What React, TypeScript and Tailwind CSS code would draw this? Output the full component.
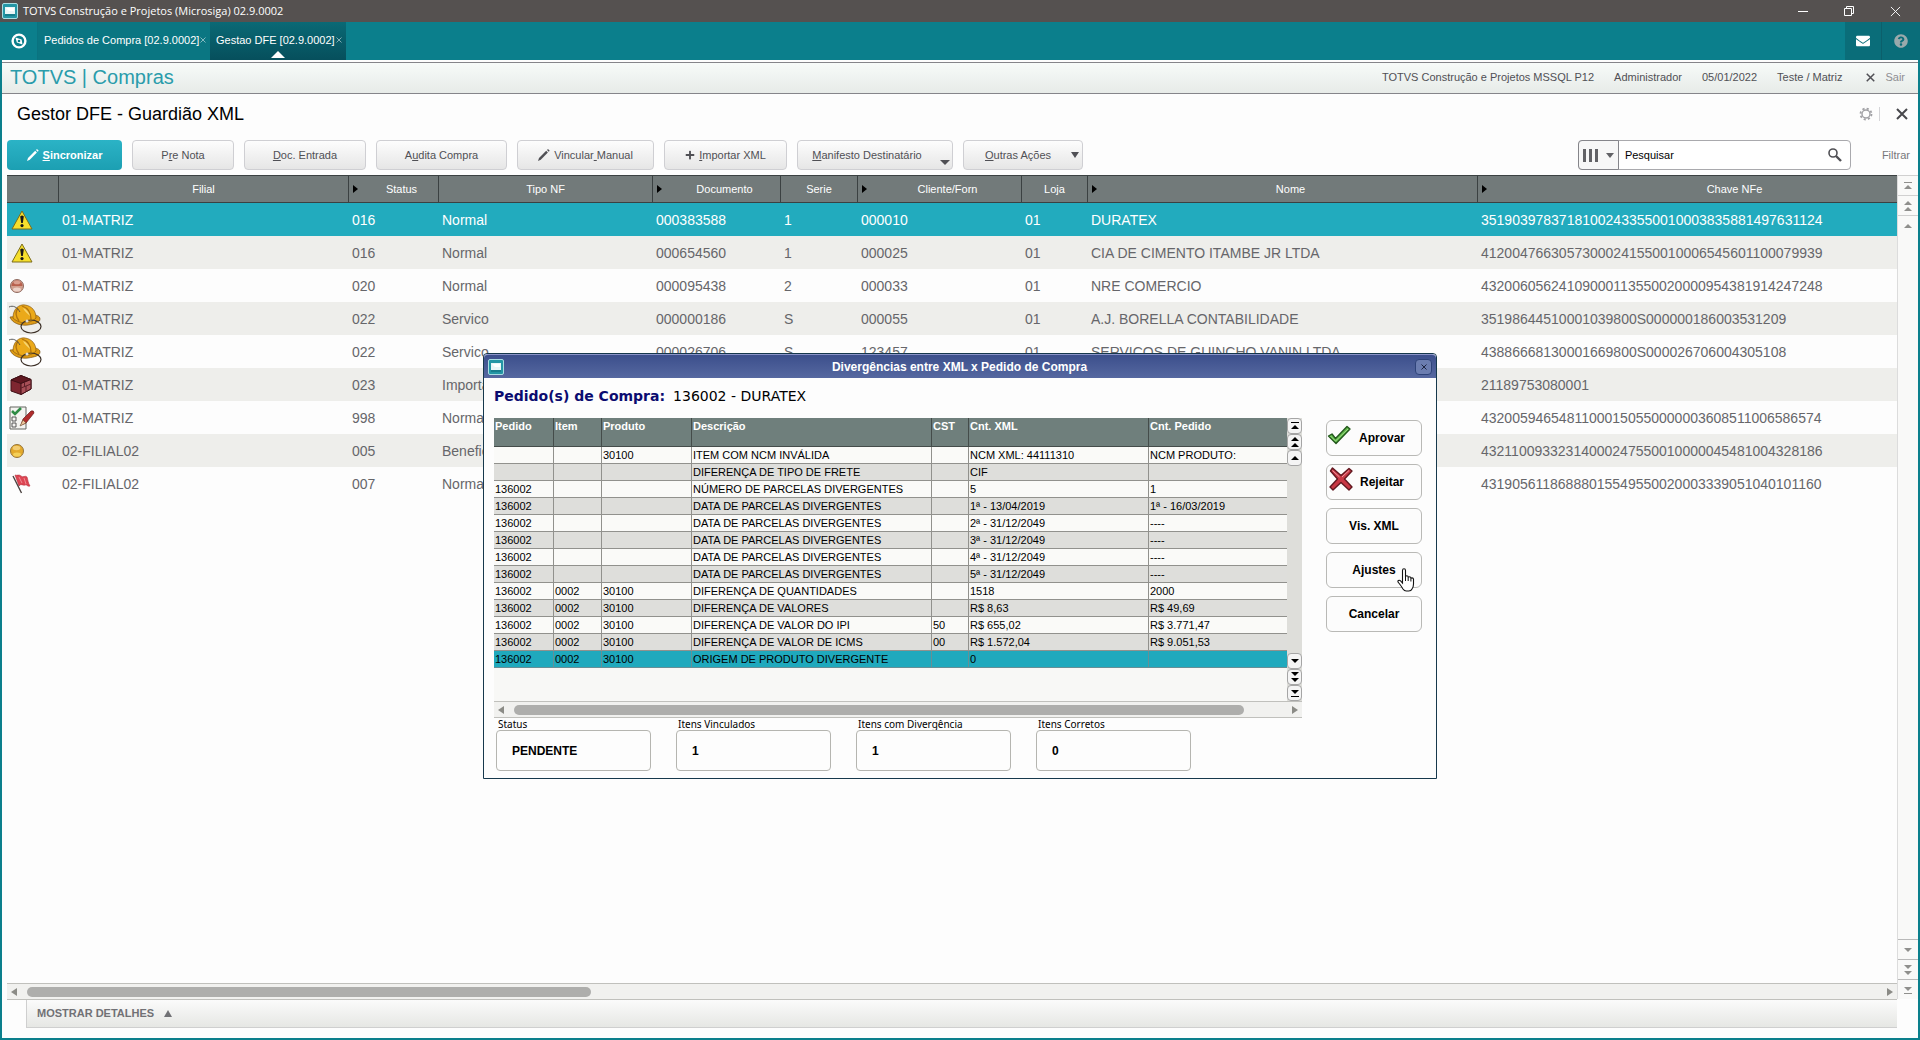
import type { ReactNode } from 'react'
import { FaEnvelope, FaPlus, FaQuestionCircle, FaSearch } from 'react-icons/fa'

type IconKind = 'warning' | 'ballRed' | 'helmet' | 'box' | 'checklist' | 'ballYellow' | 'flag'

interface Nota {
  icon: IconKind
  cells: string[]
}

const notas: Nota[] = [
  { icon: 'warning', cells: ['01-MATRIZ', '016', 'Normal', '000383588', '1', '000010', '01', 'DURATEX', '35190397837181002433550010003835881497631124'] },
  { icon: 'warning', cells: ['01-MATRIZ', '016', 'Normal', '000654560', '1', '000025', '01', 'CIA DE CIMENTO ITAMBE JR LTDA', '41200476630573000241550010006545601100079939'] },
  { icon: 'ballRed', cells: ['01-MATRIZ', '020', 'Normal', '000095438', '2', '000033', '01', 'NRE COMERCIO', '43200605624109000113550020000954381914247248'] },
  { icon: 'helmet', cells: ['01-MATRIZ', '022', 'Servico', '000000186', 'S', '000055', '01', 'A.J. BORELLA CONTABILIDADE', '35198644510001039800S000000186003531209'] },
  { icon: 'helmet', cells: ['01-MATRIZ', '022', 'Servico', '000026706', 'S', '123457', '01', 'SERVICOS DE GUINCHO VANIN LTDA', '43886668130001669800S000026706004305108'] },
  { icon: 'box', cells: ['01-MATRIZ', '023', 'Importacao', '', '', '', '', '', '21189753080001'] },
  { icon: 'checklist', cells: ['01-MATRIZ', '998', 'Normal', '', '', '', '', '', '43200594654811000150550000003608511006586574'] },
  { icon: 'ballYellow', cells: ['02-FILIAL02', '005', 'Beneficiamento', '', '', '', '', '', '43211009332314000247550010000045481004328186'] },
  { icon: 'flag', cells: ['02-FILIAL02', '007', 'Normal', '', '', '', '', '', '43190561186888015549550020003339051040101160'] },
]

const columns = [
  { label: '', width: 'w-[52px]', marker: false },
  { label: 'Filial', width: 'w-[290px]', marker: false },
  { label: 'Status', width: 'w-[90px]', marker: true },
  { label: 'Tipo NF', width: 'w-[214px]', marker: false },
  { label: 'Documento', width: 'w-32', marker: true },
  { label: 'Serie', width: 'w-[77px]', marker: false },
  { label: 'Cliente/Forn', width: 'w-[164px]', marker: true },
  { label: 'Loja', width: 'w-[66px]', marker: false },
  { label: 'Nome', width: 'w-[390px]', marker: true },
  { label: 'Chave NFe', width: 'w-[498px]', marker: true },
]

const divergenceColumns = [
  { label: 'Pedido', width: 'w-[60px]' },
  { label: 'Item', width: 'w-12' },
  { label: 'Produto', width: 'w-[90px]' },
  { label: 'Descrição', width: 'w-60' },
  { label: 'CST', width: 'w-[37px]' },
  { label: 'Cnt. XML', width: 'w-[180px]' },
  { label: 'Cnt. Pedido', width: 'w-[138px]' },
]

const divergences = [
  ['', '', '30100', 'ITEM COM NCM INVÁLIDA', '', 'NCM XML: 44111310', 'NCM PRODUTO:'],
  ['', '', '', 'DIFERENÇA DE TIPO DE FRETE', '', 'CIF', ''],
  ['136002', '', '', 'NÚMERO DE PARCELAS DIVERGENTES', '', '5', '1'],
  ['136002', '', '', 'DATA DE PARCELAS DIVERGENTES', '', '1ª - 13/04/2019', '1ª - 16/03/2019'],
  ['136002', '', '', 'DATA DE PARCELAS DIVERGENTES', '', '2ª - 31/12/2049', '----'],
  ['136002', '', '', 'DATA DE PARCELAS DIVERGENTES', '', '3ª - 31/12/2049', '----'],
  ['136002', '', '', 'DATA DE PARCELAS DIVERGENTES', '', '4ª - 31/12/2049', '----'],
  ['136002', '', '', 'DATA DE PARCELAS DIVERGENTES', '', '5ª - 31/12/2049', '----'],
  ['136002', '0002', '30100', 'DIFERENÇA DE QUANTIDADES', '', '1518', '2000'],
  ['136002', '0002', '30100', 'DIFERENÇA DE VALORES', '', 'R$ 8,63', 'R$ 49,69'],
  ['136002', '0002', '30100', 'DIFERENÇA DE VALOR DO IPI', '50', 'R$ 655,02', 'R$ 3.771,47'],
  ['136002', '0002', '30100', 'DIFERENÇA DE VALOR DE ICMS', '00', 'R$ 1.572,04', 'R$ 9.051,53'],
  ['136002', '0002', '30100', 'ORIGEM DE PRODUTO DIVERGENTE', '', '0', ''],
]

const summary = [
  { id: 'status', label: 'Status', value: 'PENDENTE' },
  { id: 'vinculados', label: 'Itens Vinculados', value: '1' },
  { id: 'divergencia', label: 'Itens com Divergência', value: '1' },
  { id: 'corretos', label: 'Itens Corretos', value: '0' },
]

function AppIcon() {
  return (
    <svg viewBox="0 0 16 16" className="h-4 w-4 shrink-0">
      <rect x="0.5" y="0.5" width="15" height="15" rx="1.5" fill="#2496a5" stroke="#a9dde2" />
      <rect x="3" y="4" width="10" height="7" fill="#e9f6f7" />
      <path d="M4 5h8v3H7z" fill="#fff" />
      <path d="M3 12h10" stroke="#0d6674" />
    </svg>
  )
}

function PenIcon() {
  return (
    <svg viewBox="0 0 12 12" className="h-3 w-3 shrink-0">
      <path d="M0 12l1-3L8.200 1.800l1.700 1.700L2.800 10.800z" fill="currentColor" />
      <path d="M9 1l1-1 1.700 1.700-1 1z" fill="currentColor" />
    </svg>
  )
}

function XIcon({ className }: { className: string }) {
  return (
    <svg viewBox="0 0 12 12" className={className} stroke="currentColor" fill="none">
      <path d="M1 1l10 10M11 1L1 11" />
    </svg>
  )
}

function GearIcon() {
  return (
    <svg viewBox="0 0 14 14" className="h-3.5 w-3.5" fill="none" stroke="currentColor">
      <circle cx="7" cy="7" r="4" strokeWidth="1.400" />
      <circle cx="7" cy="7" r="5.500" strokeWidth="1.800" strokeDasharray="2.160 2.160" />
    </svg>
  )
}

function RowIcon({ kind }: { kind: IconKind }) {
  switch (kind) {
    case 'warning':
      return (
        <svg viewBox="0 0 22 20" className="ml-1 h-5 w-[22px]">
          <path d="M11 1L21 19H1z" fill="#f6df2c" stroke="#7c6c1a" strokeLinejoin="round" />
          <path d="M9.200 6.400q1.800-1.600 3.600 0L11.800 13h-1.600z" fill="#181818" />
          <circle cx="11" cy="15.600" r="1.600" fill="#181818" />
        </svg>
      )
    case 'ballRed':
      return (
        <svg viewBox="0 0 16 16" className="ml-0.5 h-4 w-4">
          <circle cx="8" cy="8" r="6.500" fill="#d2a08f" stroke="#8f6a60" />
          <path d="M2.500 8a5.500 5.500 0 0 1 11 0z" fill="#b8604d" />
          <ellipse cx="8" cy="4.500" rx="3.500" ry="1.800" fill="#dba090" />
          <ellipse cx="8" cy="11.500" rx="4" ry="2" fill="#ecd2c8" />
        </svg>
      )
    case 'ballYellow':
      return (
        <svg viewBox="0 0 16 16" className="ml-0.5 h-4 w-4">
          <circle cx="8" cy="8" r="6.500" fill="#e3a92b" stroke="#96753a" />
          <ellipse cx="7.500" cy="5" rx="3.800" ry="2.200" fill="#f3cd72" />
          <ellipse cx="8" cy="11.500" rx="4" ry="2" fill="#f4cf58" />
        </svg>
      )
    case 'helmet':
      return (
        <svg viewBox="0 0 34 30" className="ml-0.5 h-[30px] w-[34px]">
          <path d="M1 13c2 6 10 9 18 8 6-1 12-2 12-6 0-3-4-4-6-4z" fill="#dd9a14" stroke="#7d5413" strokeWidth="0.700" />
          <path d="M4 14C4 5 10 0 16 1c7 1 11 6 11 13-4 4-11 6-16 4-3-1-5-2-7-4z" fill="#eba919" stroke="#8a5c12" strokeWidth="0.700" />
          <path d="M9 4C6 8 7 13 10 17M13 2c6 2 9 7 9 13" fill="none" stroke="#b0730f" strokeWidth="1.300" />
          <path d="M14 4c3 1 6 4 7 8-3-3-6-5-7-8z" fill="#f7d671" />
          <path d="M0 3c4-2 8 0 11 5" fill="none" stroke="#4b4b4b" strokeWidth="0.900" />
          <ellipse cx="22" cy="22.500" rx="10" ry="6.500" fill="none" stroke="#3d3128" strokeWidth="1.200" />
          <circle cx="18" cy="17" r="1.500" fill="#ddd" />
        </svg>
      )
    case 'box':
      return (
        <svg viewBox="0 0 22 20" className="ml-[3px] h-5 w-[22px]">
          <path d="M1 5L11 .5 21 4.500 21 14 11 19.500 1 16z" fill="#7e2630" stroke="#3f1117" />
          <path d="M1 5l10 3.500L21 4.500 11 .5z" fill="#5f1720" stroke="#3f1117" />
          <path d="M11 8.500L21 4.500V14l-10 5.500z" fill="#a84f57" stroke="#3f1117" />
          <path d="M11 13l10-4M14.500 7.200v4.300M16 11v5.500" stroke="#5b1f26" />
        </svg>
      )
    case 'checklist':
      return (
        <svg viewBox="0 0 26 24" className="ml-0.5 h-6 w-[26px]">
          <path d="M1 1h16v22H1z" fill="#f4f4f1" stroke="#62655f" />
          <path d="M3 11h4v4H3zM3 17h4v4H3z" fill="none" stroke="#565656" />
          <path d="M3 5l3 3 6-6" fill="none" stroke="#2f8c45" strokeWidth="2.600" />
          <path d="M12 19l2-6 8-8q3-1 3 2l-8 10z" fill="#b02c2c" stroke="#6a1b1b" strokeWidth="0.700" />
          <path d="M11 20l3-6 3 3z" fill="#efc9a0" stroke="#6a4b2b" strokeWidth="0.600" />
        </svg>
      )
    case 'flag':
      return (
        <svg viewBox="0 0 20 20" className="ml-1 h-5 w-5">
          <path d="M4 1c2 1 4-1 6 1s4-1 6 1c1 3 1 6 3 9-3 1-3-2-5-1s-4-2-6 1z" fill="#dd4553" stroke="#b5323e" strokeWidth="0.600" />
          <path d="M8 3l3 6M13 4l2 6" stroke="#f08c94" />
          <path d="M2 2l8.500 17" stroke="#4a4240" strokeWidth="1.400" />
        </svg>
      )
  }
}

type ArrowKind = 'top' | 'pageUp' | 'up' | 'down' | 'pageDown' | 'bottom'

const upArrows: ArrowKind[] = ['top', 'pageUp', 'up']
const downArrows: ArrowKind[] = ['down', 'pageDown', 'bottom']

const arrowPaths: Record<ArrowKind, string> = {
  top: 'M2 2h8v1H2zM6 5l4 4H2z',
  pageUp: 'M6 1l4 4H2zM6 7l4 4H2z',
  up: 'M6 4l4 4H2z',
  down: 'M6 8L2 4h8z',
  pageDown: 'M6 5L2 1h8zM6 11L2 7h8z',
  bottom: 'M6 7L2 3h8zM2 9h8v1H2z',
}

const arrowNames: Record<ArrowKind, string> = {
  top: 'Primeiro',
  pageUp: 'Página acima',
  up: 'Acima',
  down: 'Abaixo',
  pageDown: 'Página abaixo',
  bottom: 'Último',
}

function ScrollArrow({ kind, className }: { kind: ArrowKind; className: string }) {
  return (
    <button type="button" aria-label={arrowNames[kind]} className={`flex items-center justify-center ${className}`}>
      <svg viewBox="0 0 12 12" className="h-3 w-3" fill="currentColor">
        <path d={arrowPaths[kind]} />
      </svg>
    </button>
  )
}

function HScroll({ thumb }: { thumb: string }) {
  return (
    <div className="flex h-[17px] items-center border-y border-[#c0c0bc] bg-[#f1f1ef] text-[#8b8b86]">
      <svg viewBox="0 0 6 8" className="mx-1 h-2 w-1.5 shrink-0" fill="currentColor">
        <path d="M6 0v8L0 4z" />
      </svg>
      <div className="flex-1 px-1.5">
        <div className={`h-2.5 rounded-full bg-[#aeaeac] ${thumb}`} />
      </div>
      <svg viewBox="0 0 6 8" className="mx-1 h-2 w-1.5 shrink-0" fill="currentColor">
        <path d="M0 0v8l6-4z" />
      </svg>
    </div>
  )
}

function ToolButton({ width, children }: { width: string; children: ReactNode }) {
  return (
    <button
      type="button"
      className={`relative flex h-[30px] items-center justify-center gap-1 rounded-sm border border-[#cfcfd3] bg-gradient-to-b from-[#fdfdfd] to-[#e6e6e6] text-[11px] text-[#505055] ${width}`}
    >
      {children}
    </button>
  )
}

function TitleBar() {
  return (
    <div className="flex h-[22px] items-center bg-[#555150] pl-0.5 text-white">
      <AppIcon />
      <span className="ml-[5px] font-['Open_Sans','Noto_Sans',sans-serif] text-[11px]">TOTVS Construção e Projetos (Microsiga) 02.9.0002</span>
      <div className="ml-auto flex items-center gap-9 pr-[19px]">
        <button type="button" aria-label="Minimizar" className="flex h-3 w-2.5 items-center">
          <span className="h-px w-2.5 bg-white" />
        </button>
        <button type="button" aria-label="Restaurar">
          <svg viewBox="0 0 10 10" className="h-2.5 w-2.5" fill="none" stroke="#fff">
            <path d="M.5 2.500h7v7h-7zM2.500 2.500v-2h7v7h-2" />
          </svg>
        </button>
        <button type="button" aria-label="Fechar">
          <XIcon className="h-[11px] w-[11px]" />
        </button>
      </div>
    </div>
  )
}

function TabBar() {
  return (
    <div className="flex h-[38px] bg-[#0b7f8c] text-[11px] whitespace-nowrap text-white">
      <button type="button" aria-label="Menu" className="flex w-[38px] items-center justify-center border-r border-[#0a7380]">
        <svg viewBox="0 0 16 16" className="h-4 w-4">
          <circle cx="8" cy="8" r="6.400" fill="none" stroke="#fff" strokeWidth="2.400" />
          <path d="M4.500 4.500L10.600 6.600 11.500 11.500 5.800 9.600z" fill="#fff" />
          <circle cx="8" cy="8" r="1.300" fill="#0b7f8c" />
        </svg>
      </button>
      <div className="flex w-[172px] items-center justify-between bg-[#0a7682] pr-1 pb-0.5 pl-1.5">
        <a href="#pedidos">Pedidos de Compra [02.9.0002]</a>
        <XIcon className="h-1.5 w-1.5" />
      </div>
      <div className="relative flex w-[136px] items-center justify-between bg-gradient-to-b from-[#0a6975] to-[#064f5c] pr-1 pb-0.5 pl-1.5">
        <a href="#gestao">Gestao DFE [02.9.0002]</a>
        <XIcon className="h-1.5 w-1.5" />
        <svg viewBox="0 0 14 7" className="absolute bottom-0.5 left-1/2 h-[7px] w-3.5 -translate-x-1/2" fill="#fff">
          <path d="M7 0l7 7H0z" />
        </svg>
      </div>
      <div className="ml-auto flex">
        <button type="button" aria-label="Mensagens" className="flex w-[37px] items-center justify-center border-r border-[#0c5f6b] bg-[#0a6d79]">
          <FaEnvelope className="h-3.5 w-3.5" />
        </button>
        <button type="button" aria-label="Ajuda" className="flex w-[38px] items-center justify-center bg-[#0a6d79]">
          <FaQuestionCircle className="h-3.5 w-3.5 text-[#9aa9ab]" />
        </button>
      </div>
    </div>
  )
}

function SystemHeader() {
  return (
    <header className="mt-0.5 flex h-8 items-center border-y border-[#85858a] bg-gradient-to-b from-[#f7fbf9] to-[#e7ebe8] pr-[13px] pb-0.5 pl-2">
      <h1 className="text-xl leading-5 text-[#2a9cab]">TOTVS | Compras</h1>
      <div className="ml-auto flex items-center gap-5 text-[11px] text-[#505055]">
        <span>TOTVS Construção e Projetos MSSQL P12</span>
        <span>Administrador</span>
        <span>05/01/2022</span>
        <span>Teste / Matriz</span>
        <button type="button" className="ml-1 flex items-center gap-2.5">
          <XIcon className="h-[9px] w-[9px] stroke-2" />
          <span className="text-[#8f8f92]">Sair</span>
        </button>
      </div>
    </header>
  )
}

function Toolbar() {
  return (
    <div className="flex gap-2.5 pr-2 pl-[5px]">
      <button
        type="button"
        className="flex h-[30px] w-[115px] items-center justify-center gap-1 rounded-sm bg-gradient-to-b from-[#2bb3c6] to-[#1c9fb2] text-[11px] font-bold text-white"
      >
        <PenIcon />
        <span><u>S</u>incronizar</span>
      </button>
      <ToolButton width="w-[102px]"><span>P<u>r</u>e Nota</span></ToolButton>
      <ToolButton width="w-[122px]"><span><u>D</u>oc. Entrada</span></ToolButton>
      <ToolButton width="w-[131px]"><span>A<u>u</u>dita Compra</span></ToolButton>
      <ToolButton width="w-[137px]"><PenIcon /><span>Vincular<u> </u>Manual</span></ToolButton>
      <ToolButton width="w-[123px]"><FaPlus className="h-2.5 w-2.5" /><span><u>I</u>mportar XML</span></ToolButton>
      <ToolButton width="w-[156px]">
        <span className="mr-4"><u>M</u>anifesto Destinatário</span>
        <svg viewBox="0 0 10 5" className="absolute right-0.5 bottom-1 h-[5px] w-2.5" fill="currentColor"><path d="M0 0h10L5 5z" /></svg>
      </ToolButton>
      <ToolButton width="w-[120px]">
        <span className="mr-2.5"><u>O</u>utras Ações</span>
        <svg viewBox="0 0 8 6" className="absolute top-[11px] right-[3px] h-1.5 w-2" fill="currentColor"><path d="M0 0h8L4 6z" /></svg>
      </ToolButton>
      <div className="ml-auto flex items-center gap-[31px]">
        <div className="flex h-[30px] w-[273px] items-center rounded border border-[#a9a9ad] bg-white">
          <button type="button" aria-label="Colunas" className="-ml-px flex h-[30px] w-[41px] items-center justify-center gap-2 rounded-l border border-[#85858a] bg-[#f7f7f7] text-[#626266]">
            <svg viewBox="0 0 15 13" className="h-[13px] w-[15px]" fill="currentColor"><path d="M0 0h3v13H0zM6 0h3v13H6zM12 0h3v13h-3z" /></svg>
            <svg viewBox="0 0 8 5" className="h-[5px] w-2" fill="currentColor"><path d="M0 0h8L4 5z" /></svg>
          </button>
          <input aria-label="Pesquisar" defaultValue="Pesquisar" className="min-w-0 flex-1 px-1.5 text-[11px] text-black outline-none" />
          <svg viewBox="0 0 14 14" className="mr-2 h-3.5 w-3.5 text-[#505055]" fill="none" stroke="currentColor">
            <circle cx="5" cy="5" r="4" strokeWidth="1.600" />
            <path d="M8 8l5 5" strokeWidth="2.400" />
          </svg>
        </div>
        <a href="#filtrar" className="text-[11px] text-[#77777b]">Filtrar</a>
      </div>
    </div>
  )
}

function NotasTable() {
  return (
    <table className="w-[1969px] table-fixed border-separate border-spacing-0">
      <thead>
        <tr className="h-7 bg-[#727a7a] text-[11px] text-white">
          {columns.map((col) => (
            <th key={col.label} className={`border-y border-r border-[#3b4142] p-0 font-normal ${col.width}`}>
              {col.marker ? (
                <div className="flex items-center pl-1">
                  <svg viewBox="0 0 5 8" className="h-2 w-[5px]" fill="#000"><path d="M0 0l5 4-5 4z" /></svg>
                  <span className="flex-1 pl-[7px]">{col.label}</span>
                </div>
              ) : (
                col.label
              )}
            </th>
          ))}
        </tr>
      </thead>
      <tbody className="text-sm text-[#66666a]">
        {notas.map((nota, index) => (
          <tr
            key={nota.cells[8]}
            className={`h-[33px] ${index === 0 ? 'bg-[#22abbe] text-white' : index % 2 ? 'bg-[#eeeeeb]' : 'bg-[#fdfdfd]'}`}
          >
            <td className="p-0"><RowIcon kind={nota.icon} /></td>
            {nota.cells.map((cell, i) => (
              <td key={i} className="overflow-hidden py-0 pr-0 pl-[3px] whitespace-nowrap">{cell}</td>
            ))}
          </tr>
        ))}
      </tbody>
    </table>
  )
}

function DivergenceTable() {
  return (
    <div>
      <div className="flex h-[283px] bg-[#f8f8f6]">
        <div className="w-[793px]">
          <table className="w-full table-fixed border-separate border-spacing-0 text-[11px]">
            <thead>
              <tr className="h-[29px] bg-[#6f7f7c] text-white">
                {divergenceColumns.map((col) => (
                  <th key={col.label} className={`border-r border-b border-[#444c4a] py-0 pr-0 pl-px text-left align-top leading-4 font-bold last:border-r-0 ${col.width}`}>
                    {col.label}
                  </th>
                ))}
              </tr>
            </thead>
            <tbody className="text-black">
              {divergences.map((row, index) => {
                const selected = index === divergences.length - 1
                return (
                  <tr key={index} className={`h-[17px] ${selected ? 'bg-[#1fa9bd]' : index % 2 ? 'bg-[#dededb]' : 'bg-[#fafaf8]'}`}>
                    {row.map((cell, i) => (
                      <td
                        key={i}
                        className={`border-r border-b py-0 pr-0 pl-px leading-4 whitespace-nowrap last:border-r-0 ${
                          selected ? 'border-[#668f96]' : 'border-[#91918d]'
                        }`}
                      >
                        {cell}
                      </td>
                    ))}
                  </tr>
                )
              })}
            </tbody>
          </table>
        </div>
        <div className="flex w-[15px] flex-col bg-[#dededa] text-black">
          {upArrows.map((kind) => (
            <ScrollArrow key={kind} kind={kind} className="h-4 w-[15px] rounded-sm border border-[#a5a5a5] bg-[#f4f4f4]" />
          ))}
          <div className="flex-1" />
          {downArrows.map((kind) => (
            <ScrollArrow key={kind} kind={kind} className="h-4 w-[15px] rounded-sm border border-[#a5a5a5] bg-[#f4f4f4]" />
          ))}
        </div>
      </div>
      <HScroll thumb="w-[95%]" />
    </div>
  )
}

function DialogButton({ children }: { children: ReactNode }) {
  return (
    <button type="button" className="relative flex h-9 w-24 items-center justify-center rounded-md border border-[#b9b9b6] bg-[#fcfcfc] text-xs font-bold text-black">
      {children}
    </button>
  )
}

function HandCursor() {
  return (
    <svg viewBox="0 0 18 24" className="absolute top-[15px] left-[70px] h-6 w-[18px]">
      <path
        d="M5.500 15V2.500q0-1.700 1.500-1.700t1.500 1.700V9q0-1.200 1.300-1.200T11.200 9v.8q0-1 1.300-1t1.400 1.200v.8q0-.9 1.200-.9t1.400 1.300V16q0 3-1.500 5-.8 2-3.300 2H9.300q-2 0-3.300-2-2-3.500-4.600-6.500-1-1.200 0-2 1-.7 2.200.4z"
        fill="#fff"
        stroke="#111"
        strokeWidth="1.100"
      />
      <path d="M8.500 9v4M11.200 9.500V13M13.900 10.500V13.500" stroke="#111" />
    </svg>
  )
}

function DivergenceDialog() {
  return (
    <div className="absolute inset-x-0 top-[353px] flex justify-center">
      <section role="dialog" aria-label="Divergências entre XML x Pedido de Compra" className="w-[954px] rounded-t border border-[#16384c] bg-[#fdfdfd]">
        <div className="flex h-6 items-center rounded-t border-t border-[#8a93c8] bg-gradient-to-b from-[#3c4f8c] to-[#5668a0] px-1">
          <AppIcon />
          <h2 className="flex-1 text-center text-xs font-bold text-white">Divergências entre XML x Pedido de Compra</h2>
          <button type="button" aria-label="Fechar" className="flex h-4 w-[17px] items-center justify-center rounded-sm border border-[#2e4379] bg-[#6b7db0]">
            <XIcon className="h-1.5 w-1.5 stroke-2 text-[#1d2540]" />
          </button>
        </div>
        <div className="flex h-10 items-center gap-2 pb-1 pl-2.5 font-['DejaVu_Sans',sans-serif] text-sm text-black">
          <span className="font-bold text-[#0b0b70]">Pedido(s) de Compra:</span>
          <span>136002 - DURATEX</span>
        </div>
        <div className="flex gap-6 pr-3 pl-2.5">
          <DivergenceTable />
          <div className="flex flex-col gap-2 pt-0.5">
            <DialogButton>
              <svg viewBox="0 0 24 20" className="absolute top-1 left-0 h-5 w-6">
                <path d="M1.500 11l3.500-2 3.500 4.500L20 1.500 23 4 9 18.500z" fill="#5fb848" stroke="#24591d" strokeWidth="1.400" strokeLinejoin="round" />
                <path d="M3.500 11l5 5L21 4" fill="none" stroke="#a4e08c" strokeWidth="0.900" />
              </svg>
              <span className="pl-4">Aprovar</span>
            </DialogButton>
            <DialogButton>
              <svg viewBox="0 0 24 24" className="absolute top-0.5 left-0.5 h-6 w-6">
                <path d="M3.500 1L12 8.500 20 1.500 23 4 15.500 12 23 20 20 23 12 15.500 4 23 1 20 8.500 12 1.500 4z" fill="#c93845" stroke="#611820" strokeWidth="1.400" strokeLinejoin="round" />
                <path d="M3.500 3.500l7 6.500M20 3.500l-7 6.500" stroke="#ee9aa2" />
              </svg>
              <span className="pl-4">Rejeitar</span>
            </DialogButton>
            <DialogButton>Vis. XML</DialogButton>
            <DialogButton>
              Ajustes
              <HandCursor />
            </DialogButton>
            <DialogButton>Cancelar</DialogButton>
          </div>
        </div>
        <div className="flex gap-[25px] pb-[7px] pl-3">
          {summary.map((field) => (
            <div key={field.id} className="flex w-[155px] flex-col">
              <label htmlFor={field.id} className="pl-0.5 font-['Noto_Sans',sans-serif] text-[10px] leading-3 text-black">{field.label}</label>
              <input
                id={field.id}
                readOnly
                defaultValue={field.value}
                className="h-[41px] w-full rounded border border-[#b5b5b0] bg-[#fdfdfd] px-[15px] text-xs font-bold text-black outline-none"
              />
            </div>
          ))}
        </div>
      </section>
    </div>
  )
}

export default function App() {
  return (
    <div className="relative flex min-h-screen flex-col bg-[#0b7f8c] font-['Liberation_Sans',Arial,sans-serif]">
      <TitleBar />
      <TabBar />
      <main className="mx-0.5 mb-0.5 flex flex-1 flex-col bg-[#fdfdfd]">
        <SystemHeader />
        <div className="flex h-[46px] items-center justify-between pr-2.5 pb-1.5 pl-[15px]">
          <h2 className="text-lg leading-5 text-black">Gestor DFE - Guardião XML</h2>
          <div className="flex items-center">
            <button type="button" aria-label="Configurar" className="border-r border-[#d5d5d8] pr-1.5 text-[#a0a0a4]">
              <GearIcon />
            </button>
            <button type="button" aria-label="Fechar" className="pl-4 text-[#48484c]">
              <XIcon className="h-3 w-3 stroke-2" />
            </button>
          </div>
        </div>
        <Toolbar />
        <div className="mt-[5px] flex flex-1 pl-[5px]">
          <div className="flex min-w-0 flex-1 flex-col">
            <div className="min-h-0 flex-1 overflow-hidden">
              <NotasTable />
            </div>
            <HScroll thumb="w-[30.5%]" />
            <div className="mb-2.5 ml-[19px] flex h-7 items-center border-b border-l border-[#cfcfcf] bg-gradient-to-b from-[#fbfbfb] to-[#e6e7e4] pl-2.5">
              <button type="button" className="flex items-center gap-2.5 text-[11px] font-bold text-[#717175]">
                MOSTRAR DETALHES
                <svg viewBox="0 0 8 7" className="h-[7px] w-2" fill="currentColor"><path d="M4 0l4 7H0z" /></svg>
              </button>
            </div>
          </div>
          <div className="mb-[39px] flex w-[21px] shrink-0 flex-col border-l border-[#dcdcdc] bg-[#f9f9f8] text-[#8f8f8c]">
            {upArrows.map((kind) => (
              <ScrollArrow key={kind} kind={kind} className="h-5 w-5 border-t border-[#d0d0d0]" />
            ))}
            <div className="flex-1" />
            {downArrows.map((kind) => (
              <ScrollArrow key={kind} kind={kind} className="h-5 w-5 border-t border-[#b9b9b9]" />
            ))}
          </div>
        </div>
      </main>
      <DivergenceDialog />
    </div>
  )
}
